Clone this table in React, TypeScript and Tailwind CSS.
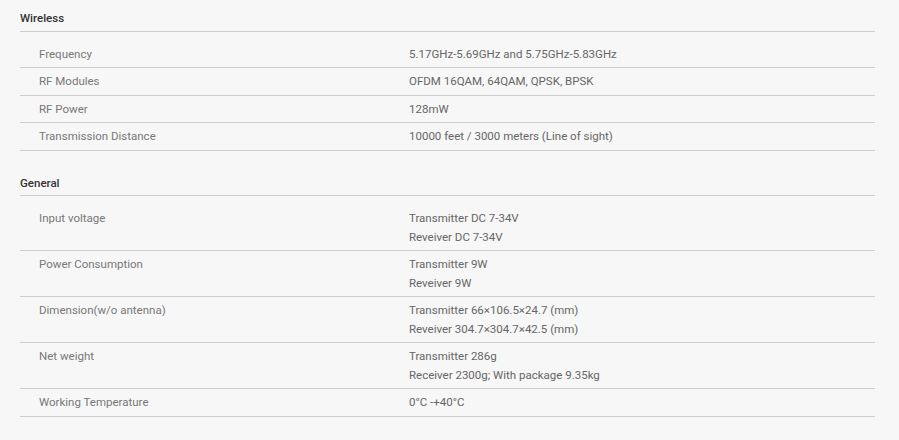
const sections = [
  {
    title: 'Wireless',
    rows: [
      { label: 'Frequency', value: ['5.17GHz-5.69GHz and 5.75GHz-5.83GHz'] },
      { label: 'RF Modules', value: ['OFDM 16QAM, 64QAM, QPSK, BPSK'] },
      { label: 'RF Power', value: ['128mW'] },
      { label: 'Transmission Distance', value: ['10000 feet / 3000 meters (Line of sight)'] },
    ],
  },
  {
    title: 'General',
    rows: [
      { label: 'Input voltage', value: ['Transmitter DC 7-34V', 'Reveiver DC 7-34V'] },
      { label: 'Power Consumption', value: ['Transmitter 9W', 'Reveiver 9W'] },
      { label: 'Dimension(w/o antenna)', value: ['Transmitter 66×106.5×24.7 (mm)', 'Reveiver 304.7×304.7×42.5 (mm)'] },
      { label: 'Net weight', value: ['Transmitter 286g', 'Receiver 2300g; With package 9.35kg'] },
      { label: 'Working Temperature', value: ['0°C -+40°C'] },
    ],
  },
];

export default function App() {
  return (
    <div className="min-h-[440px] w-[899px] bg-[#f7f7f7] pl-5 pr-6 font-['Roboto',sans-serif] text-[11.5px] leading-[18.5px]">
      {sections.map((section, i) => (
        <div key={i} className="mb-[14px]">
          <div className="border-b border-[#cfcfcf] pt-[9px] pb-[3px] font-medium text-[#333]">
            {section.title}
          </div>
          <div className="mt-[9px]">
            {section.rows.map((row, j) => (
              <div key={j} className="flex border-b border-[#cfcfcf] py-1">
                <div className="w-[389px] shrink-0 pl-[19px] text-[#777]">{row.label}</div>
                <div className="text-[#666]">
                  {row.value.map((v, k) => (
                    <div key={k}>{v}</div>
                  ))}
                </div>
              </div>
            ))}
          </div>
        </div>
      ))}
    </div>
  );
}
